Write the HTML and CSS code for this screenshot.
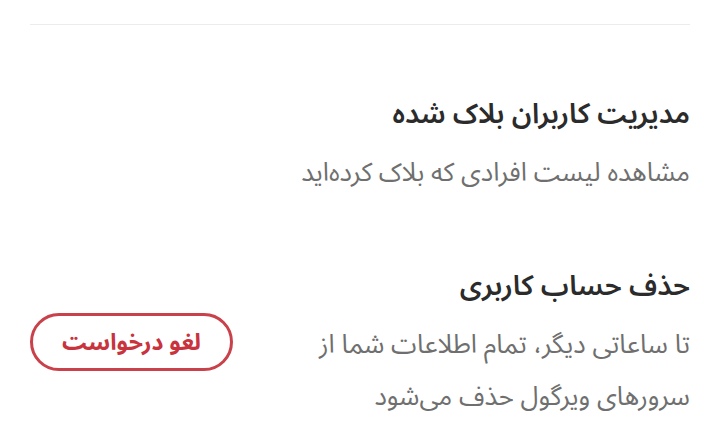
FILE: index.html
```html
<!DOCTYPE html>
<html lang="fa" dir="rtl">
<head>
  <meta charset="UTF-8" />
  <meta name="viewport" content="width=device-width, initial-scale=1" />
  <title>تنظیمات حساب</title>
  <link rel="stylesheet" href="styles.css">
</head>
<body>
  <main class="settings">
    <hr class="divider" />

    <!-- Blocked users -->
    <section class="setting-row">
      <div class="setting-text">
        <h3>مدیریت کاربران بلاک شده</h3>
        <p>مشاهده لیست افرادی که بلاک کرده‌اید</p>
      </div>
    </section>

    <!-- Delete account -->
    <section class="setting-row danger">
      <div class="setting-text">
        <h3>حذف حساب کاربری</h3>
        <p>تا ساعاتی دیگر، تمام اطلاعات شما از<br />سرورهای ویرگول حذف می‌شود</p>
      </div>
      <button class="btn-outline" type="button">لغو درخواست</button>
    </section>
  </main>
</body>
</html>
```

FILE: styles.css
```css
* {
  box-sizing: border-box;
  margin: 0;
  padding: 0;
}

body {
  background: #fff;
  color: #2b2b2b;
  font-family: 'Noto Sans Arabic', 'DejaVu Sans', 'Noto Sans', sans-serif;
}

.settings {
  padding: 0 30px;
}

.divider {
  border: none;
  border-top: 1px solid #ececec;
  margin-top: 24px;
}

.setting-row {
  display: flex;
  align-items: center;
  justify-content: space-between;
  padding-top: 70px;
}

.setting-text h3 {
  font-size: 28px;
  font-weight: 600;
  line-height: 40px;
  color: #2b2b2b;
}

.setting-text p {
  font-size: 26px;
  line-height: 52px;
  color: #6f6f6f;
  margin-top: 12px;
}

.danger {
  padding-top: 68px;
}

.btn-outline {
  font-family: inherit;
  font-size: 23px;
  font-weight: 700;
  color: #c8333d;
  background: #fff;
  border: 3px solid #c9414a;
  border-radius: 30px;
  width: 203px;
  height: 58px;
  margin-bottom: 6px;
  cursor: pointer;
}
```
